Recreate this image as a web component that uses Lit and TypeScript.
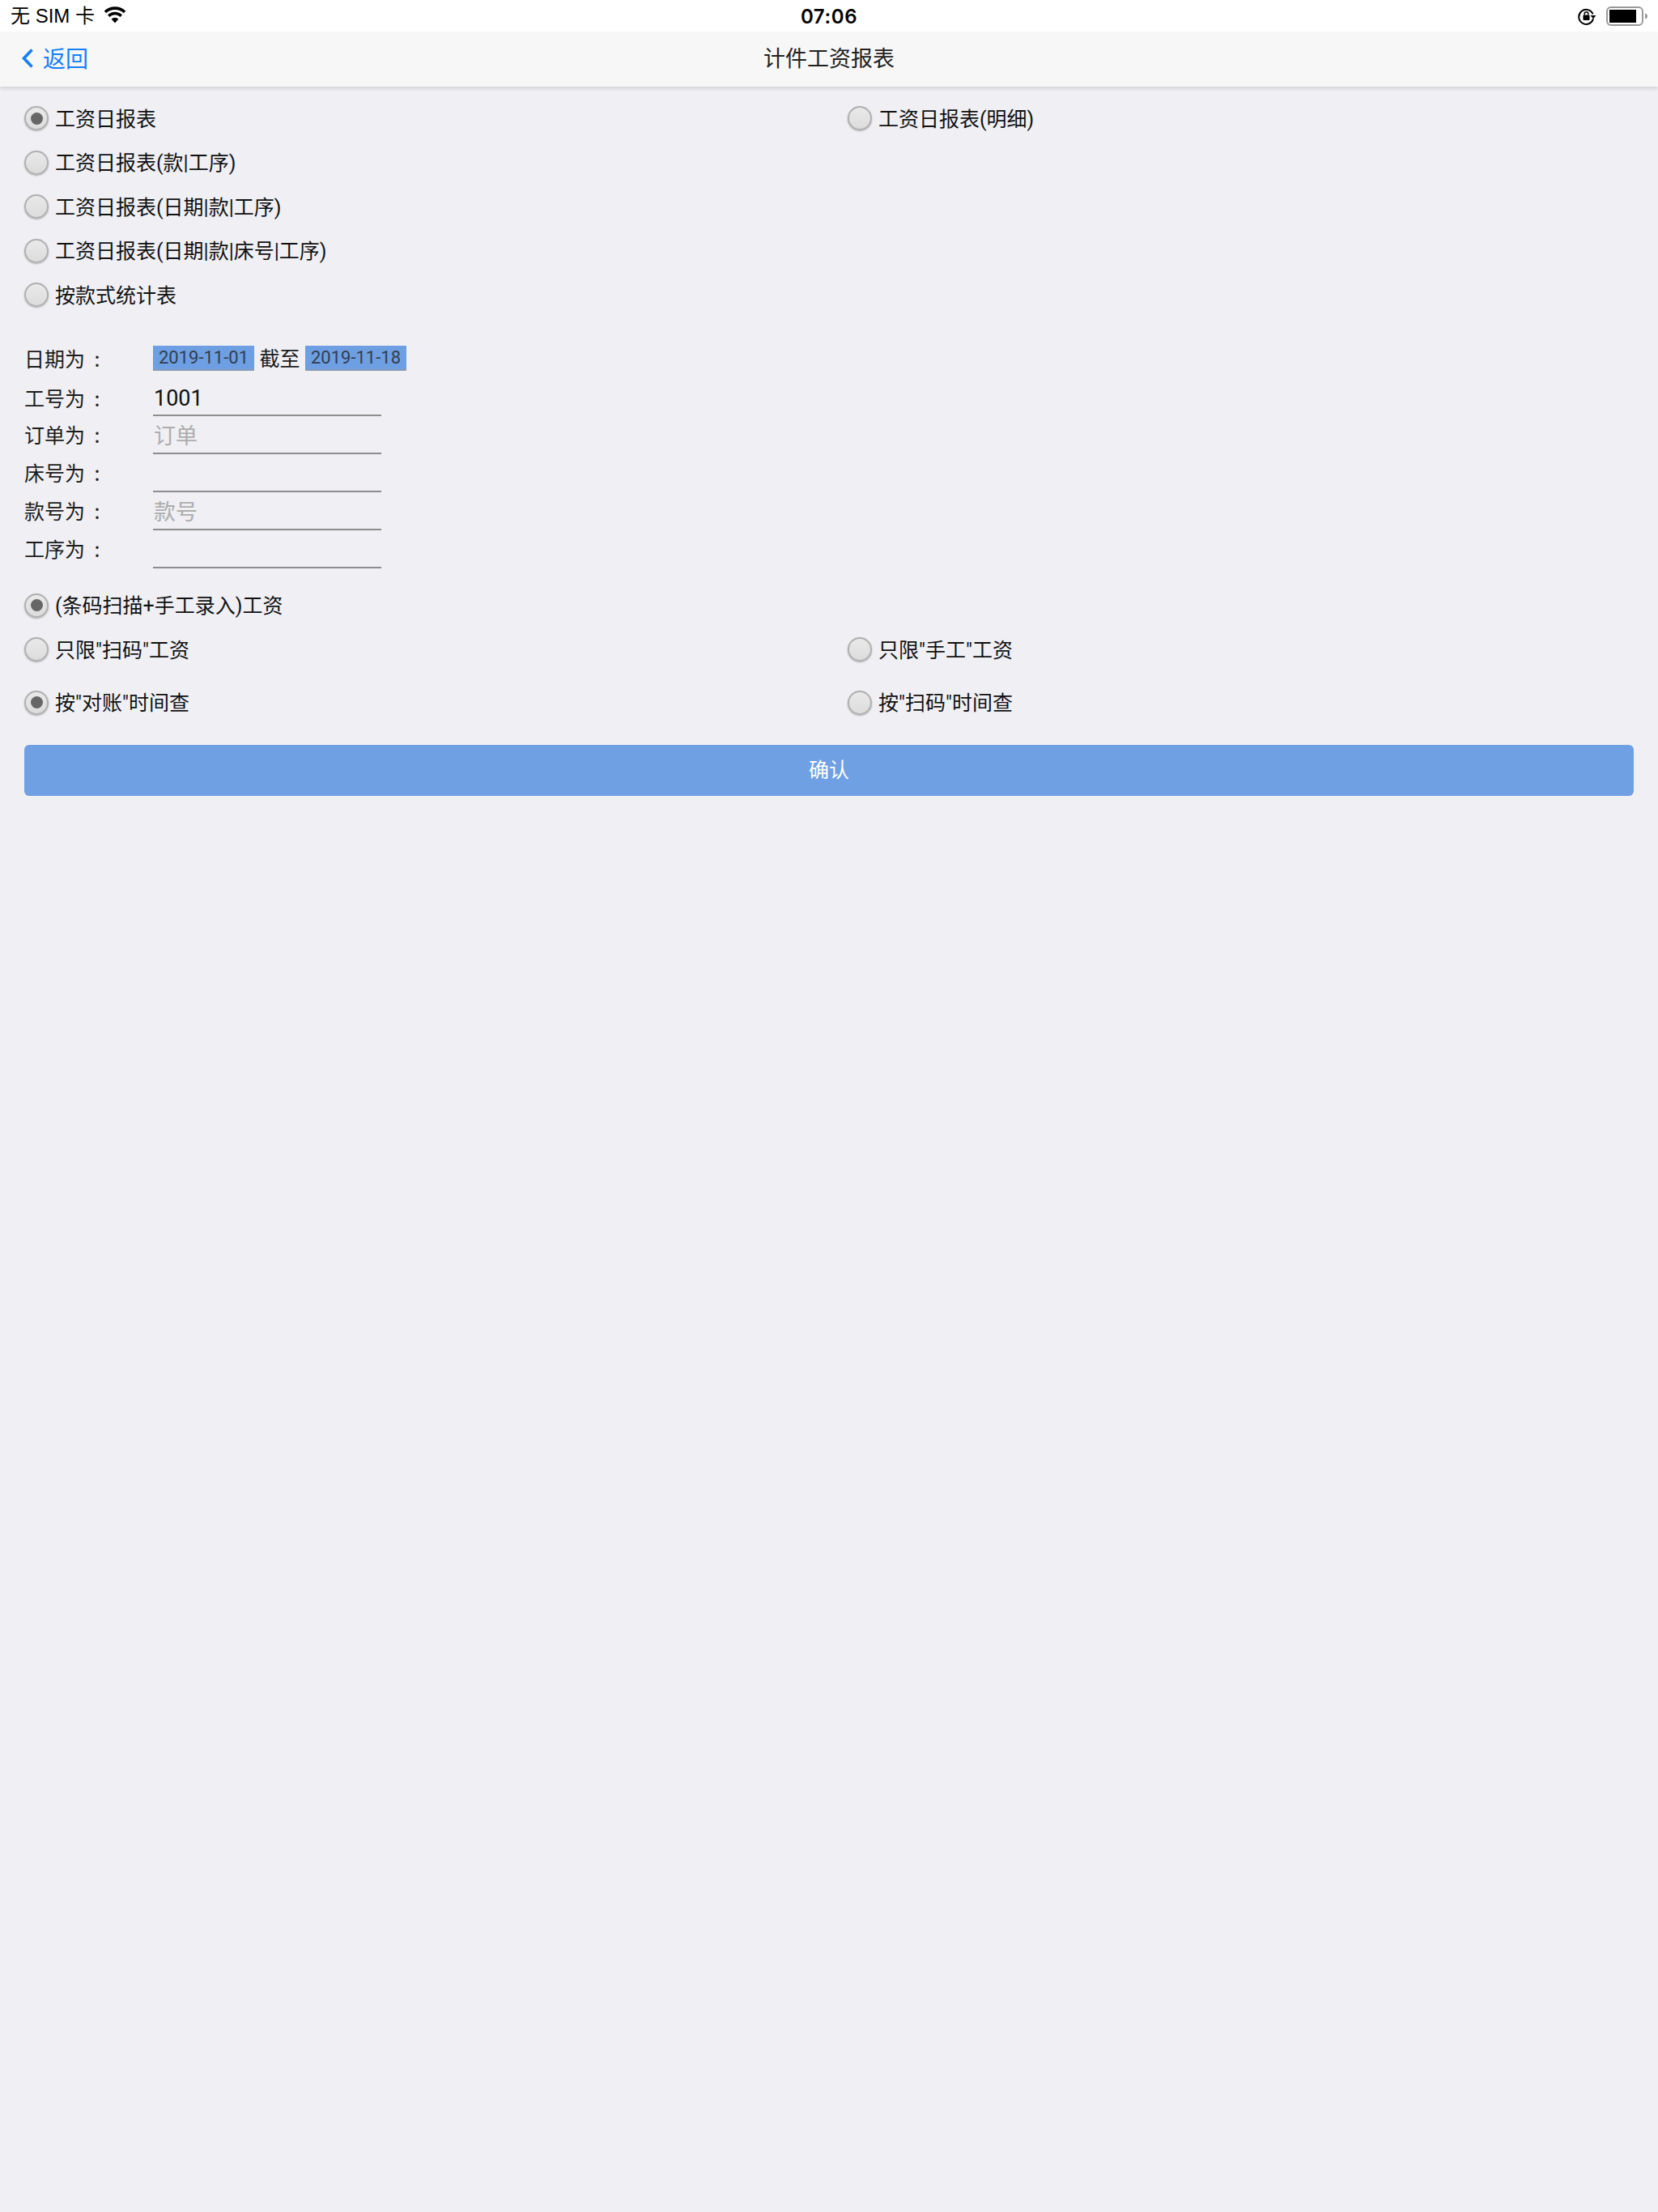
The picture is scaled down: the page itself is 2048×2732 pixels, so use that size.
import { LitElement, html, css } from "lit";
import { customElement } from "lit/decorators.js";

@customElement("app-root")
export class AppRoot extends LitElement {
  static styles = css`
    :host { display: block; width: 2048px; height: 2732px; background: #efeff4; font-family: Roboto, "Noto Sans CJK SC", sans-serif; color: #111; overflow: hidden; }
    .status { height: 40px; background: #fff; display: grid; grid-template-columns: 1fr auto 1fr; align-items: center; font-family: "Liberation Sans", "Noto Sans CJK SC", sans-serif; font-size: 24px; color: #000; }
    .status-left { display: flex; align-items: center; padding-left: 13px; gap: 11px; }
    .status-left span { margin-bottom: 5px; }
    .status-left svg { margin-bottom: 3px; }
    .status-right { display: flex; justify-content: flex-end; align-items: center; gap: 12px; padding-right: 12px; }
    .time { font-family: Inter, sans-serif; font-weight: 600; font-size: 24px; letter-spacing: 0.6px; }
    .nav { height: 67px; padding-bottom: 6px; box-sizing: border-box; background: #f7f7f7; box-shadow: 0 2px 5px rgba(0,0,0,.14); display: grid; grid-template-columns: 1fr auto 1fr; align-items: center; font-size: 27px; font-family: "Noto Sans CJK SC", sans-serif; position: relative; }
    .back { display: flex; align-items: center; gap: 11px; padding-left: 26px; color: #167efb; font-size: 28px; }
    .back svg { margin-top: 2px; }
    .title { color: #222; }
    .main { padding: 12px 30px 0; }
    .grid { display: grid; grid-template-columns: 1017px 1fr; }
    .r { height: 54.5px; display: flex; align-items: center; gap: 8px; font-size: 25px; font-family: Roboto, "Noto Sans CJK SC", sans-serif; color: #111; white-space: pre; }
    .r .t { margin-bottom: 3px; }
    .dot { width: 30px; height: 30px; box-sizing: border-box; border-radius: 50%; border: 2px solid #b0b0b0; background: linear-gradient(#e9e9e9, #dcdcdc); box-shadow: 0 1px 2px rgba(0,0,0,.3); display: flex; align-items: center; justify-content: center; flex: none; }
    .dot.on::after { content: ""; width: 15px; height: 15px; border-radius: 50%; background: #666; }
    .form { margin-top: 35px; }
    .f { display: grid; grid-template-columns: 159px auto; height: 47px; align-items: start; font-size: 25px; font-family: "Noto Sans CJK SC", sans-serif; color: #1c1c1c; }
    .f.d { height: 52px; }
    .lab { line-height: 20px; word-spacing: 6px; white-space: pre; }
    .f.d .lab { line-height: 31px; }
    .f.first .lab { line-height: 24px; }
    .date-row { display: flex; align-items: flex-start; gap: 6.500px; }
    .date { width: 125px; height: 31px; box-sizing: border-box; background: #6d9fe2; border-bottom: 2px solid #8a9cb5; font: 22px/29px Roboto, sans-serif; color: #333e4e; text-align: center; }
    .to { line-height: 29px; font-size: 25px; }
    .inp { width: 282px; height: 35px; box-sizing: border-box; border-bottom: 2px solid #8e8e8e; font-size: 27px; line-height: 27px; padding-left: 1px; }
    .inp.v { font-family: Roboto, sans-serif; font-size: 27px; color: #111; }
    .inp.p { color: #adadad; line-height: 22px; }
    .g2 { margin-top: 7px; }
    .gap { height: 11px; }
    .btn { margin-top: 25px; height: 63px; padding-bottom: 5px; box-sizing: border-box; border-radius: 6px; background: #6fa0e4; color: #fff; font-size: 25px; font-family: "Noto Sans CJK SC", sans-serif; display: flex; align-items: center; justify-content: center; }
  `;

  private radio(label: string, on = false) {
    return html`<div class="r"><span class=${on ? "dot on" : "dot"}></span><span class="t">${label}</span></div>`;
  }

  private field(label: string, cls: string, val = "", rowCls = "") {
    return html`<div class="f ${rowCls}"><span class="lab">${label} :</span><div class="inp ${cls}">${val}</div></div>`;
  }

  render() {
    return html`
      <div class="status">
        <div class="status-left">
          <span>无 SIM 卡</span>
          <svg width="28" height="22" viewBox="0 0 28 22" aria-hidden="true">
            <path d="M14 20.500 9.600 15.400a6.600 6.600 0 0 1 8.800 0z" fill="#000"/>
            <path d="M7.400 12.900 5 10.200a13.200 13.200 0 0 1 18 0l-2.400 2.700a9.600 9.600 0 0 0-13.200 0z" fill="#000"/>
            <path d="M3.200 8.200.7 5.400a19.600 19.600 0 0 1 26.600 0l-2.500 2.800a16 16 0 0 0-21.600 0z" fill="#000"/>
          </svg>
        </div>
        <span class="time">07:06</span>
        <div class="status-right">
          <svg width="24" height="24" viewBox="0 0 24 24" aria-hidden="true">
            <path d="M19.600 9.500A9 9 0 1 0 20 15" fill="none" stroke="#000" stroke-width="2"/>
            <path d="M16.500 11h7l-3.500 4.200z" fill="#000"/>
            <rect x="7.500" y="10.500" width="8" height="6.500" rx="1" fill="#000"/>
            <path d="M9.200 10.500V9a2.300 2.300 0 0 1 4.600 0v1.500" fill="none" stroke="#000" stroke-width="1.500"/>
          </svg>
          <svg width="52" height="24" viewBox="0 0 52 24" aria-hidden="true">
            <rect x="1" y="1" width="44" height="22" rx="5" fill="none" stroke="#999" stroke-width="2"/>
            <rect x="4" y="4" width="33" height="16" fill="#000"/>
            <path d="M48 8.500c2 .5 3 1.500 3 3.500s-1 3-3 3.500z" fill="#999"/>
          </svg>
        </div>
      </div>
      <div class="nav">
        <div class="back">
          <svg width="16" height="26" viewBox="0 0 16 26" aria-hidden="true"><path d="M13.500 2.500 3.500 13l10 10.500" fill="none" stroke="#167efb" stroke-width="3.600"/></svg>
          <span>返回</span>
        </div>
        <div class="title">计件工资报表</div>
        <div></div>
      </div>
      <div class="main">
        <div class="grid">
          ${this.radio("工资日报表", true)}${this.radio("工资日报表(明细)")}
          ${this.radio("工资日报表(款|工序)")}<div></div>
          ${this.radio("工资日报表(日期|款|工序)")}<div></div>
          ${this.radio("工资日报表(日期|款|床号|工序)")}<div></div>
          ${this.radio("按款式统计表")}<div></div>
        </div>
        <div class="form">
          <div class="f d">
            <span class="lab">日期为 :</span>
            <div class="date-row">
              <div class="date">2019-11-01</div><span class="to">截至</span><div class="date">2019-11-18</div>
            </div>
          </div>
          ${this.field("工号为", "v", "1001", "first")}
          ${this.field("订单为", "p", "订单")}
          ${this.field("床号为", "")}
          ${this.field("款号为", "p", "款号")}
          ${this.field("工序为", "")}
        </div>
        <div class="grid g2">
          ${this.radio("(条码扫描+手工录入)工资", true)}<div></div>
          ${this.radio('只限"扫码"工资')}${this.radio('只限"手工"工资')}
        </div>
        <div class="gap"></div>
        <div class="grid">
          ${this.radio('按"对账"时间查', true)}${this.radio('按"扫码"时间查')}
        </div>
        <div class="btn">确认</div>
      </div>
    `;
  }
}
